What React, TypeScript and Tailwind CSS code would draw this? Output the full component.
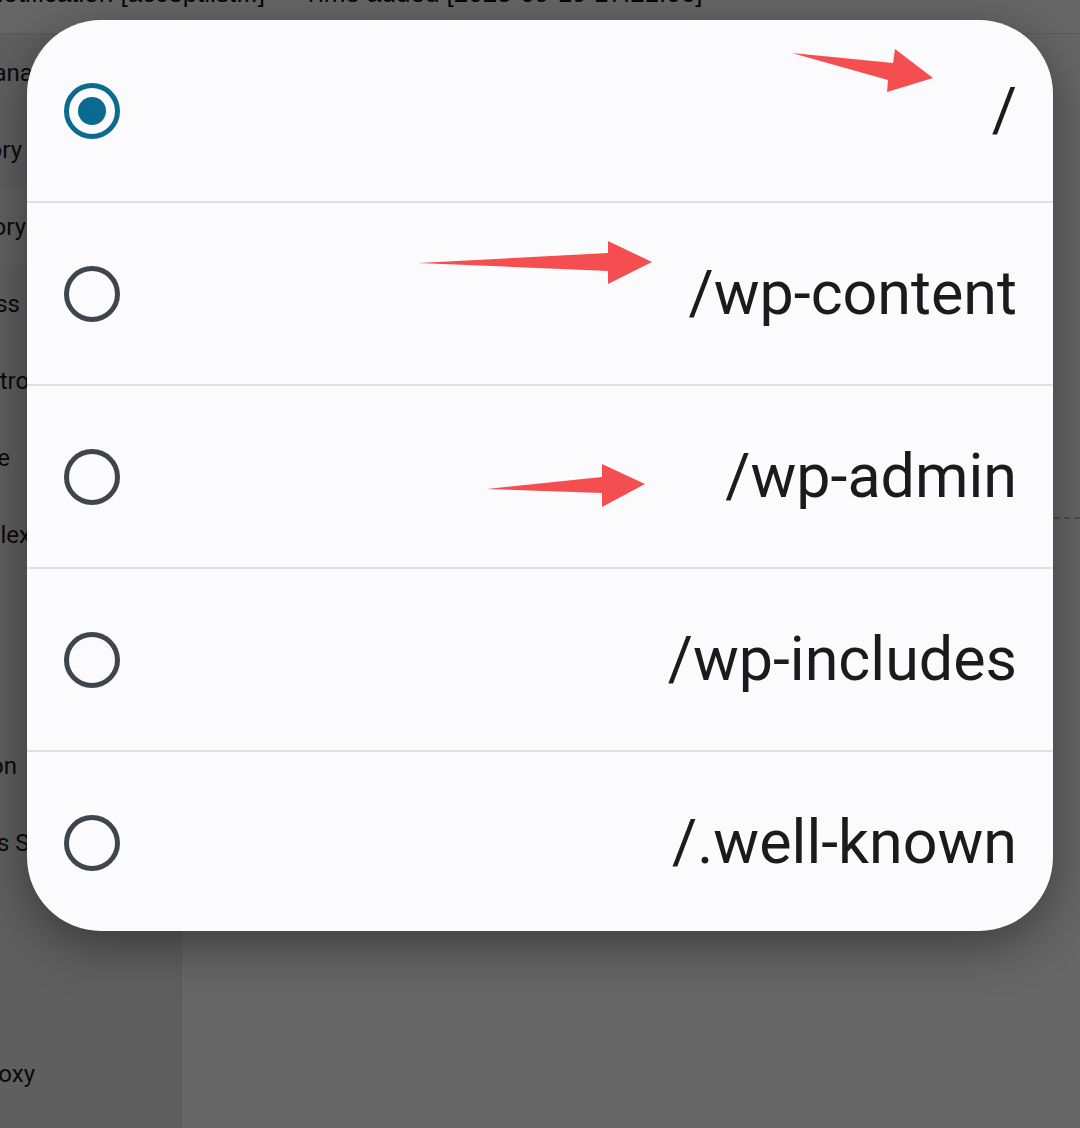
import React from "react";

const sideRows: { text: string; end: number }[] = [
  { text: "Management", end: 114 },
  { text: "Category", end: 22 },
  { text: "Directory", end: 26 },
  { text: "Access", end: 20 },
  { text: "Control", end: 35 },
  { text: "Cache", end: 10 },
  { text: "Complex", end: 31 },
  { text: "", end: 10 },
  { text: "", end: 10 },
  { text: "Option", end: 17 },
  { text: "Bots Settings", end: 103 },
  { text: "", end: 10 },
  { text: "", end: 10 },
  { text: "Proxy", end: 35 },
];

const options = ["/", "/wp-content", "/wp-admin", "/wp-includes", "/.well-known"];

function Radio({ checked }: { checked: boolean }) {
  if (checked) {
    return (
      <div className="w-[56px] h-[56px] rounded-full border-[5px] border-[#0a6a8f] flex items-center justify-center shrink-0">
        <div className="w-[28px] h-[28px] rounded-full bg-[#0a6a8f]" />
      </div>
    );
  }
  return <div className="w-[56px] h-[56px] rounded-full border-[5px] border-[#3e454c] shrink-0" />;
}

export default function App() {
  return (
    <div
      className="relative w-[1080px] h-[1128px] overflow-hidden bg-white"
      style={{ fontFamily: "Roboto, 'Noto Sans', sans-serif" }}
    >
      {/* underlying page */}
      <div className="flex flex-col h-full">
        <div className="h-[34px] shrink-0 border-b border-[#e4e4e4] overflow-hidden">
          <div
            className="flex items-start mt-[-20px] text-[26px] leading-[26px] text-[#111] whitespace-nowrap"
            style={{ fontFamily: "'Liberation Sans', Arial, sans-serif" }}
          >
            <div className="w-[265px] flex justify-end">Notification [acceptlist...]</div>
            <div className="ml-[38px]">Time added [2025-09-19 17:21:06]</div>
          </div>
        </div>
        <div className="flex flex-1">
          <div className="w-[182px] shrink-0 bg-[#ededed] overflow-hidden flex flex-col text-[24px] text-[#1a1a1a] border-r border-[#e6e6e6]">
            {sideRows.map((r, i) => (
              <div
                key={i}
                className={`h-[77px] shrink-0 flex items-center ${i === 2 ? "bg-[#f6f6f6]" : ""}`}
              >
                <div className="flex justify-end whitespace-nowrap" style={{ width: r.end }}>
                  {r.text}
                </div>
              </div>
            ))}
          </div>
          <div className="flex-1 flex flex-col bg-white">
            <div className="h-[485px] border-b-2 border-dashed border-[#bdbdbd]" />
          </div>
        </div>
      </div>

      {/* scrim */}
      <div className="absolute inset-0 bg-black/60" />

      {/* dialog */}
      <div className="absolute inset-0 flex justify-center pt-[20px]">
        <div className="w-[1026px] h-[911px] bg-[#fbfbfd] rounded-[74px] overflow-hidden flex flex-col shadow-[0_14px_50px_rgba(0,0,0,0.4)]">
          {options.map((o, i) => (
            <React.Fragment key={o}>
              {i > 0 && <div className="h-[2px] shrink-0 bg-[#dfdfe2]" />}
              <div className="h-[181px] shrink-0 flex items-center pl-[37px] pr-[36px]">
                <Radio checked={i === 0} />
                <div className="flex-1 text-right text-[61px] leading-none text-[#1b1b1d]">
                  {o}
                </div>
              </div>
            </React.Fragment>
          ))}
        </div>
      </div>

      {/* annotation arrows */}
      <svg
        className="absolute inset-0 pointer-events-none"
        width="1080"
        height="1128"
        viewBox="0 0 1080 1128"
      >
        <polygon points="792,53 893,63 895,49 933,78 887,92 888,80" fill="#f44e50" />
        <polygon points="418,263 608,253 608,241 652,262 608,284 608,271" fill="#f44e50" />
        <polygon points="487,489 602,477 602,464 645,484 602,507 602,493" fill="#f44e50" />
      </svg>
    </div>
  );
}
